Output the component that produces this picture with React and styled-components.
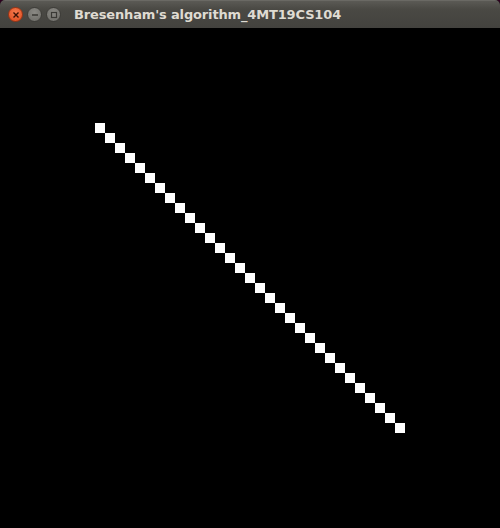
import React from 'react';
import styled, { createGlobalStyle } from 'styled-components';

const GlobalStyle = createGlobalStyle`
  html, body {
    margin: 0;
    padding: 0;
    background: #2c001e;
  }
`;

const Window = styled.div`
  width: 500px;
  height: 528px;
  display: flex;
  flex-direction: column;
  border-radius: 5px 5px 0 0;
  overflow: hidden;
  background: #000;
`;

const TitleBar = styled.div`
  height: 28px;
  flex: 0 0 28px;
  display: flex;
  align-items: center;
  padding: 0 0 0 8px;
  box-sizing: border-box;
  background: linear-gradient(#5b5a55, #4a4944 30%, #43423e);
  border-top: 1px solid #6a6964;
`;

const Buttons = styled.div`
  display: flex;
  gap: 4px;
  margin-right: 13px;
`;

const WinButton = styled.div`
  width: 15px;
  height: 15px;
  border-radius: 50%;
  box-sizing: border-box;
  display: flex;
  align-items: center;
  justify-content: center;
  background: ${(p) =>
    p.$close
      ? 'radial-gradient(circle at 50% 35%, #f47a4e, #df4a1c)'
      : 'radial-gradient(circle at 50% 35%, #8a8984, #6c6b66)'};
  border: 1px solid ${(p) => (p.$close ? '#9c3515' : '#3e3d39')};
`;

const Title = styled.div`
  font-family: 'DejaVu Sans', sans-serif;
  font-weight: bold;
  font-size: 13px;
  color: #dfdbd2;
  white-space: nowrap;
  letter-spacing: -0.15px;
`;

const Canvas = styled.svg`
  display: block;
  width: 500px;
  height: 500px;
  background: #000;
`;

const points = Array.from({ length: 31 }, (_, i) => ({ x: 95 + i * 10, y: 95 + i * 10 }));

export default function App() {
  return (
    <>
      <GlobalStyle />
      <Window>
        <TitleBar>
          <Buttons>
            <WinButton $close>
              <svg width="8" height="8" viewBox="0 0 8 8">
                <path d="M1.5 1.5 L6.5 6.5 M6.5 1.5 L1.5 6.5" stroke="#3a1206" strokeWidth="1.4" />
              </svg>
            </WinButton>
            <WinButton>
              <svg width="8" height="8" viewBox="0 0 8 8">
                <path d="M1 4 H7" stroke="#3a3935" strokeWidth="1.4" />
              </svg>
            </WinButton>
            <WinButton>
              <svg width="8" height="8" viewBox="0 0 8 8">
                <rect x="1.5" y="1.5" width="5" height="5" fill="none" stroke="#3a3935" strokeWidth="1.2" />
              </svg>
            </WinButton>
          </Buttons>
          <Title>Bresenham's algorithm_4MT19CS104</Title>
        </TitleBar>
        <Canvas viewBox="0 0 500 500">
          {points.map((p, i) => (
            <rect key={i} x={p.x} y={p.y} width="10" height="10" fill="#fff" />
          ))}
        </Canvas>
      </Window>
    </>
  );
}
